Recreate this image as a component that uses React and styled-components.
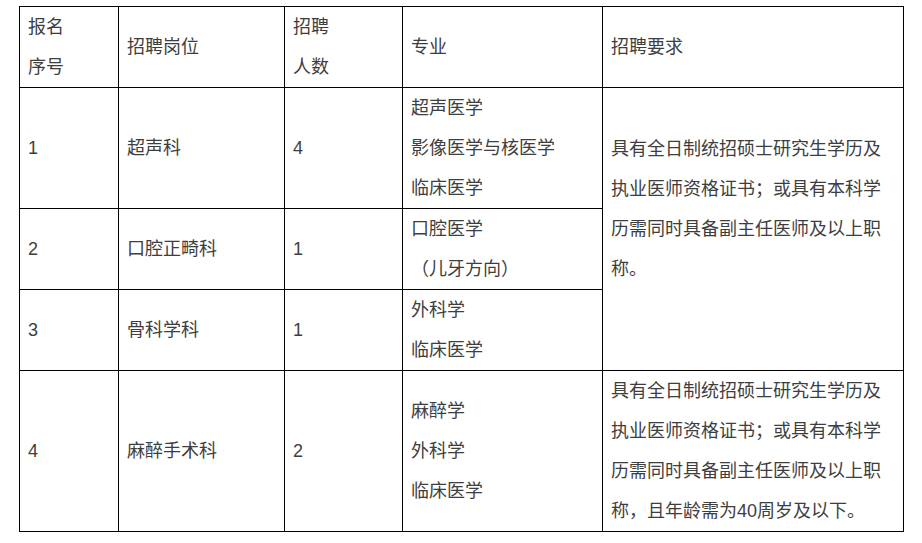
import React from 'react'
import styled, { createGlobalStyle } from 'styled-components';

const Global = createGlobalStyle`
    body{
        margin:0;
        background:#fff;
    }
`;

const rows = [
    { no: '1', post: '超声科', count: '4', majors: ['超声医学', '影像医学与核医学', '临床医学'] },
    { no: '2', post: '口腔正畸科', count: '1', majors: ['口腔医学', '（儿牙方向）'] },
    { no: '3', post: '骨科学科', count: '1', majors: ['外科学', '临床医学'] },
];

const reqA = ['具有全日制统招硕士研究生学历及', '执业医师资格证书；或具有本科学', '历需同时具备副主任医师及以上职', '称。', ''];
const reqB = ['具有全日制统招硕士研究生学历及', '执业医师资格证书；或具有本科学', '历需同时具备副主任医师及以上职', '称，且年龄需为40周岁及以下。'];

function Lines({ items }) {
    return items.map((t, i) => <Line key={i}>{t || '\u00a0'}</Line>);
}

function App() {
    return (
        <Page>
            <Global />
            <Table>
                <colgroup>
                    <col style={{ width: '99px' }} />
                    <col style={{ width: '166px' }} />
                    <col style={{ width: '118px' }} />
                    <col style={{ width: '200px' }} />
                    <col style={{ width: '301px' }} />
                </colgroup>
                <tbody>
                    <tr>
                        <Cell><Lines items={['报名', '序号']} /></Cell>
                        <Cell>招聘岗位</Cell>
                        <Cell><Lines items={['招聘', '人数']} /></Cell>
                        <Cell>专业</Cell>
                        <Cell>招聘要求</Cell>
                    </tr>
                    {rows.map((r, i) => (
                        <tr key={r.no}>
                            <Cell>{r.no}</Cell>
                            <Cell>{r.post}</Cell>
                            <Cell>{r.count}</Cell>
                            <Cell><Lines items={r.majors} /></Cell>
                            {i === 0 && <Cell rowSpan={3}><Lines items={reqA} /></Cell>}
                        </tr>
                    ))}
                    <tr>
                        <Cell>4</Cell>
                        <Cell>麻醉手术科</Cell>
                        <Cell>2</Cell>
                        <Cell><Lines items={['麻醉学', '外科学', '临床医学']} /></Cell>
                        <Cell><Lines items={reqB} /></Cell>
                    </tr>
                </tbody>
            </Table>
        </Page>
    )
}

const Page = styled.div`
    padding:6px 0 0 19px;
    font-family:"Liberation Sans", "Noto Sans CJK SC", sans-serif;
    color:#3e3e3e;
`;

const Table = styled.table`
    border-collapse:collapse;
    table-layout:fixed;
    width:885px;
`;

const Cell = styled.td`
    border:1px solid #000;
    padding:0 8px;
    font-size:18px;
    line-height:40px;
    vertical-align:middle;
    white-space:nowrap;
`;

const Line = styled.div`
    height:40px;
`;

export default App
